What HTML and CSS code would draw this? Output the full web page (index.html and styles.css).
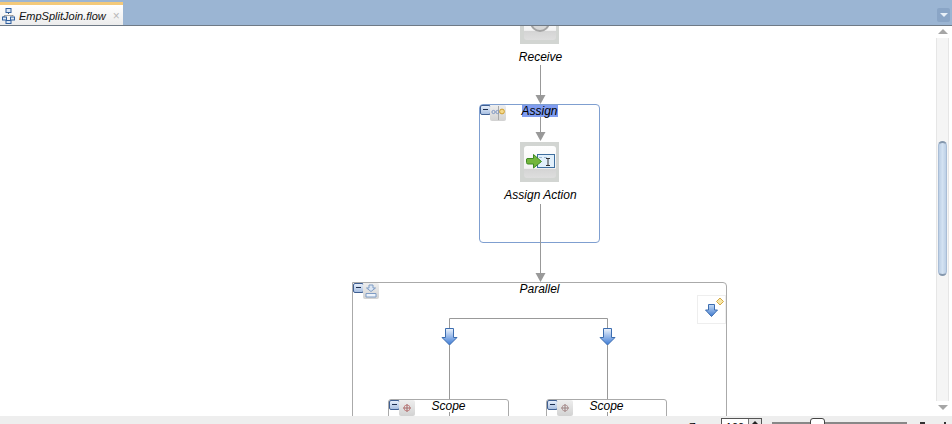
FILE: index.html
```html
<!DOCTYPE html>
<html lang="en">
<head>
    <meta charset="UTF-8">
    <title>EmpSplitJoin.flow</title>
    <link rel="stylesheet" href="styles.css">
</head>
<body>
<div class="editor">
    <div class="tabbar">
        <div class="tab">
            <svg class="tab-icon" width="13" height="16" viewBox="0 0 13 16">
                <rect x="4" y="0.5" width="5" height="4" fill="#dfe9f5" stroke="#2f5f9e"/>
                <path d="M6.5 5V7M2 9V7.5H11V9" fill="none" stroke="#555" stroke-dasharray="1 1"/>
                <rect x="0.5" y="9" width="4" height="3" fill="#dfe9f5" stroke="#2f5f9e"/>
                <rect x="8.5" y="9" width="4" height="3" fill="#dfe9f5" stroke="#2f5f9e"/>
                <rect x="4" y="12.5" width="5" height="3" fill="#dfe9f5" stroke="#2f5f9e"/>
            </svg>
            <span class="tab-title">EmpSplitJoin.flow</span>
            <span class="tab-close">×</span>
        </div>
        <div class="tab-menu"><span class="tab-menu-arrow"></span></div>
    </div>

    <div class="workspace">
        <div class="canvas">
            <!-- connectors -->
            <svg class="wires" width="936" height="390" viewBox="0 0 936 390">
                <g fill="none" stroke="#999" stroke-width="1">
                    <path d="M540.5 39V72"/>
                    <path d="M540.5 86V108"/>
                    <path d="M540.5 178V250"/>
                    <path d="M449.5 302V292.5H607.5V302"/>
                    <path d="M449.5 319V373M607.5 319V373"/>
                    <path d="M449.5 386V390M607.5 386V390"/>
                </g>
                <g fill="#999">
                    <path d="M535.5 69H545.5L540.5 78Z"/>
                    <path d="M535.5 106H545.5L540.5 115Z"/>
                    <path d="M535.5 247H545.5L540.5 256Z"/>
                </g>
            </svg>

            <div class="action receive-action">
                <div class="action-face">
                    <svg width="32" height="32" viewBox="0 0 32 32">
                        <circle cx="16" cy="14" r="9" fill="#d8d8d8" stroke="#a4a4a4" stroke-width="2"/>
                        <circle cx="16" cy="14" r="4" fill="#c4c4c4"/>
                    </svg>
                </div>
            </div>
            <div class="action-label receive-label">Receive</div>

            <div class="group assign-group">
                <span class="fold-btn"></span>
                <span class="type-icon">
                    <svg width="16" height="16" viewBox="0 0 16 16">
                        <path d="M8.500 1V15" stroke="#a8a8a8"/>
                        <circle cx="3.500" cy="7" r="1.600" fill="none" stroke="#7f96c2"/>
                        <circle cx="7.500" cy="7" r="1.600" fill="none" stroke="#7f96c2"/>
                        <circle cx="12" cy="6.500" r="2.400" fill="#f4d98b" stroke="#cf9f30"/>
                    </svg>
                </span>
                <span class="group-label selected">Assign</span>
            </div>

            <div class="action assign-action">
                <div class="action-face">
                    <svg width="32" height="32" viewBox="0 0 32 32">
                        <rect x="13.500" y="8.500" width="17" height="13" fill="#e2f0fb" stroke="#3f6f9f"/>
                        <path d="M15 11.500H18M20 11.500H23" stroke="#9db8d2"/>
                        <path d="M22 12.500H26M22 19.500H26M24 12.500V19.500" fill="none" stroke="#333"/>
                        <path d="M2.500 13Q2.500 12.500 4 12.500H9.500V8.500L17.500 15.500L9.500 22V18H4Q2.500 18 2.500 16.500Z" fill="#73b63d" stroke="#3f8a24"/>
                    </svg>
                </div>
            </div>
            <div class="action-label assign-label">Assign Action</div>

            <div class="group parallel-group">
                <span class="fold-btn"></span>
                <span class="type-icon">
                    <svg width="16" height="16" viewBox="0 0 16 16">
                        <path d="M6 2H10V5H12.500L8 8.500L3.500 5H6Z" fill="#dbe6f4" stroke="#7f9cc4"/>
                        <path d="M3 10.500H13V14H3Z" fill="#eef3fa" stroke="#7f9cc4"/>
                    </svg>
                </span>
                <span class="group-label">Parallel</span>
                <div class="add-branch">
                    <svg width="29" height="28" viewBox="0 0 29 28">
                        <defs>
                            <linearGradient id="addFill" x1="0" y1="0" x2="0" y2="1">
                                <stop offset="0" stop-color="#c8dcf5"/>
                                <stop offset="1" stop-color="#3d79cf"/>
                            </linearGradient>
                        </defs>
                        <path d="M11.500 9.500H17.500V15H20.500L14.500 21.500L8.500 15H11.500Z" fill="url(#addFill)" stroke="#3c6db0"/>
                        <path d="M23 3L26.500 6.500L23 10L19.500 6.500Z" fill="#f8e7a8" stroke="#d6aa45"/>
                    </svg>
                </div>
            </div>

            <svg class="branch-arrow branch-left" width="17" height="18" viewBox="0 0 17 18">
                <defs>
                    <linearGradient id="branchFill" x1="0" y1="0" x2="0" y2="1">
                        <stop offset="0" stop-color="#eef4fc"/>
                        <stop offset="1" stop-color="#3b7ad6"/>
                    </linearGradient>
                </defs>
                <path d="M4.500 0.500H12.500V9.500H16L8.500 17L1 9.500H4.500Z" fill="url(#branchFill)" stroke="#3c6db0"/>
            </svg>
            <svg class="branch-arrow branch-right" width="17" height="18" viewBox="0 0 17 18">
                <path d="M4.500 0.500H12.500V9.500H16L8.500 17L1 9.500H4.500Z" fill="url(#branchFill)" stroke="#3c6db0"/>
            </svg>

            <div class="group scope-group scope-left">
                <span class="fold-btn"></span>
                <span class="type-icon">
                    <svg width="16" height="16" viewBox="0 0 16 16">
                        <circle cx="8" cy="8" r="3" fill="none" stroke="#c98a8a"/>
                        <path d="M8 4V12M4 8H12" stroke="#a56a6a"/>
                    </svg>
                </span>
                <span class="group-label">Scope</span>
            </div>
            <div class="group scope-group scope-right">
                <span class="fold-btn"></span>
                <span class="type-icon">
                    <svg width="16" height="16" viewBox="0 0 16 16">
                        <circle cx="8" cy="8" r="3" fill="none" stroke="#b9a0a0"/>
                        <path d="M8 4V12M4 8H12" stroke="#998080"/>
                    </svg>
                </span>
                <span class="group-label">Scope</span>
            </div>
        </div>

        <div class="scrollbar">
            <span class="scroll-up"></span>
            <div class="scroll-track"><div class="scroll-thumb"></div></div>
            <span class="scroll-down"></span>
        </div>
    </div>

    <div class="statusbar">
        <span class="zoom-label">Zoom:</span>
        <div class="zoom-box">
            <span class="zoom-value">100</span>
            <span class="zoom-spin"></span>
        </div>
        <div class="zoom-slider"><span class="zoom-thumb"></span></div>
        <span class="zoom-mark"></span>
        <span class="zoom-mark zoom-mark-small"></span>
    </div>
</div>
</body>
</html>
```

FILE: styles.css
```css
html, body {
    margin: 0;
    height: 100%;
    overflow: hidden;
}

body {
    font-family: "Liberation Sans", Arial, sans-serif;
    background: #fff;
    color: #000;
}

.editor {
    display: flex;
    flex-direction: column;
    width: 952px;
    height: 424px;
    overflow: hidden;
}

/* tab strip */
.tabbar {
    display: flex;
    justify-content: space-between;
    flex: 0 0 26px;
    box-sizing: border-box;
    padding-top: 2px;
    background: #9bb5d3;
    border-bottom: 1px solid #6f7a86;
}

.tab {
    display: flex;
    align-items: center;
    box-sizing: border-box;
    width: 123px;
    padding: 2px 0 0 2px;
    border-top: 3px solid #f3c97a;
    background: linear-gradient(#fff, #ececec);
}

.tab-icon {
    flex: none;
    margin-right: 4px;
}

.tab-title {
    font-size: 11px;
    font-style: italic;
    white-space: nowrap;
    color: #111;
}

.tab-close {
    margin-left: 7px;
    font-size: 12px;
    line-height: 12px;
    color: #b8b8b8;
}

.tab-menu {
    display: flex;
    align-items: center;
    justify-content: center;
    width: 13px;
    height: 14px;
    margin: 6px 2px 0 0;
    background: #8aa5c6;
    border-radius: 2px;
}

.tab-menu-arrow {
    border-top: 4px solid #e8f0f8;
    border-left: 4px solid transparent;
    border-right: 4px solid transparent;
}

.workspace {
    display: flex;
    flex: 1;
    min-height: 0;
}

/* diagram */
.canvas {
    position: relative;
    flex: 1;
    overflow: hidden;
    background: #fff;
}

.wires {
    position: absolute;
    left: 0;
    top: 0;
    z-index: 2;
    pointer-events: none;
}

.action {
    position: absolute;
    box-sizing: border-box;
    width: 39px;
    height: 40px;
    padding: 4px 3px 4px 4px;
    background: #d2d5d2;
    z-index: 3;
}

.action-face {
    box-sizing: border-box;
    height: 32px;
    border-radius: 3px;
    background: linear-gradient(#fff 0, #f4f4f4 70%, #d4d4d4 72%, #dedede 100%);
}

.action-face svg {
    display: block;
}

.receive-action {
    left: 520px;
    top: -22px;
}

.assign-action {
    left: 520px;
    top: 116px;
}

.action-label {
    position: absolute;
    left: 480px;
    width: 121px;
    font-size: 12px;
    font-style: italic;
    line-height: 14px;
    text-align: center;
    background: #fff;
    z-index: 3;
}

.receive-label {
    top: 24px;
    left: 516px;
    width: 49px;
}

.assign-label {
    top: 162px;
    left: 502px;
    width: 77px;
}

.group {
    position: absolute;
    box-sizing: border-box;
    border: 1px solid #aaa;
    border-radius: 0 4px 0 0;
}

.assign-group {
    left: 479px;
    top: 78px;
    width: 121px;
    height: 139px;
    border-color: #7f9fd0;
    border-radius: 4px;
}

.parallel-group {
    left: 352px;
    top: 256px;
    width: 375px;
    height: 180px;
}

.scope-group {
    top: 373px;
    width: 121px;
    height: 40px;
    background: #fff;
    border-radius: 3px 3px 0 0;
    z-index: 1;
}

.scope-left {
    left: 388px;
}

.scope-right {
    left: 546px;
}

.fold-btn {
    position: absolute;
    left: 0;
    top: 0;
    box-sizing: border-box;
    width: 11px;
    height: 10px;
    background: linear-gradient(#e6eefa, #a9c0e2);
    border: 1px solid #3f5f92;
    border-radius: 2px;
}

.fold-btn::after {
    content: "";
    display: block;
    width: 5px;
    height: 1px;
    margin: 3px 0 0 2px;
    background: #1d2f50;
}

.type-icon {
    position: absolute;
    left: 10px;
    top: 0;
    width: 16px;
    height: 16px;
    background: linear-gradient(#eee, #d2d2d2);
    border-radius: 2px;
}

.type-icon svg {
    display: block;
}

.group-label {
    position: absolute;
    top: 0;
    left: 0;
    right: 0;
    width: max-content;
    margin: 0 auto;
    font-size: 12px;
    font-style: italic;
    line-height: 12px;
    background: #fff;
    z-index: 3;
}

.selected {
    width: 36px;
    background: #7f9cf0;
    text-align: center;
}

.add-branch {
    position: absolute;
    right: 0;
    top: 12px;
    box-sizing: border-box;
    width: 29px;
    height: 29px;
    border: 1px solid #eee;
}

.add-branch svg {
    display: block;
    margin: -1px;
}

.branch-arrow {
    position: absolute;
    top: 302px;
    z-index: 3;
}

.branch-left {
    left: 441px;
}

.branch-right {
    left: 599px;
}

/* scrollbar */
.scrollbar {
    display: flex;
    flex-direction: column;
    align-items: center;
    box-sizing: border-box;
    flex: 0 0 16px;
    width: 16px;
    padding-right: 3px;
    background: #fff;
}

.scroll-up,
.scroll-down {
    flex: none;
    width: 0;
    border-left: 5px solid transparent;
    border-right: 5px solid transparent;
}

.scroll-up {
    margin: 3px 0 4px;
    border-bottom: 5px solid #a6a6a6;
}

.scroll-down {
    margin: 4px 0 6px;
    border-top: 5px solid #a6a6a6;
}

.scroll-track {
    flex: 1;
    box-sizing: border-box;
    width: 13px;
    padding: 103px 1px 0;
    background: #f5f5f5;
    border-left: 1px solid #e6e6e6;
    border-right: 1px solid #e6e6e6;
}

.scroll-thumb {
    box-sizing: border-box;
    height: 135px;
    background: linear-gradient(90deg, #bdd0e6, #d3e2f2 50%, #bdd0e6);
    border: 1px solid #a9bdd6;
    border-top: 2px solid #8497ad;
    border-bottom: 2px solid #8497ad;
    border-radius: 5px;
}

/* zoom controls, only the top of them fits in the window */
.statusbar {
    position: relative;
    display: flex;
    align-items: flex-start;
    flex: 0 0 8px;
    overflow: hidden;
    padding-left: 689px;
    background: #eee;
}

.zoom-label {
    width: 32px;
    margin-top: 5px;
    font-size: 11px;
    line-height: 12px;
}

.zoom-box {
    display: flex;
    box-sizing: border-box;
    width: 41px;
    height: 14px;
    margin-top: 2px;
    background: #fff;
    border: 1px solid #555;
}

.zoom-value {
    flex: 1;
    padding-top: 3px;
    font-size: 11px;
    line-height: 11px;
    text-align: center;
}

.zoom-spin {
    display: flex;
    justify-content: center;
    width: 12px;
    background: #e4e4e4;
    border-left: 1px solid #777;
}

.zoom-spin::after {
    content: "";
    width: 0;
    height: 0;
    margin-top: 2px;
    border-bottom: 3px solid #222;
    border-left: 3px solid transparent;
    border-right: 3px solid transparent;
}

.zoom-slider {
    position: relative;
    box-sizing: border-box;
    width: 135px;
    height: 2px;
    margin: 6px 0 0 10px;
    background: #888;
}

.zoom-thumb {
    position: absolute;
    left: 38px;
    top: -4px;
    box-sizing: border-box;
    width: 15px;
    height: 16px;
    background: #fff;
    border: 1px solid #444;
    border-radius: 3px;
}

.zoom-mark {
    width: 5px;
    height: 2px;
    margin: 6px 0 0 13px;
    background: #333;
}

.zoom-mark-small {
    width: 2px;
    margin-left: 19px;
}
```
